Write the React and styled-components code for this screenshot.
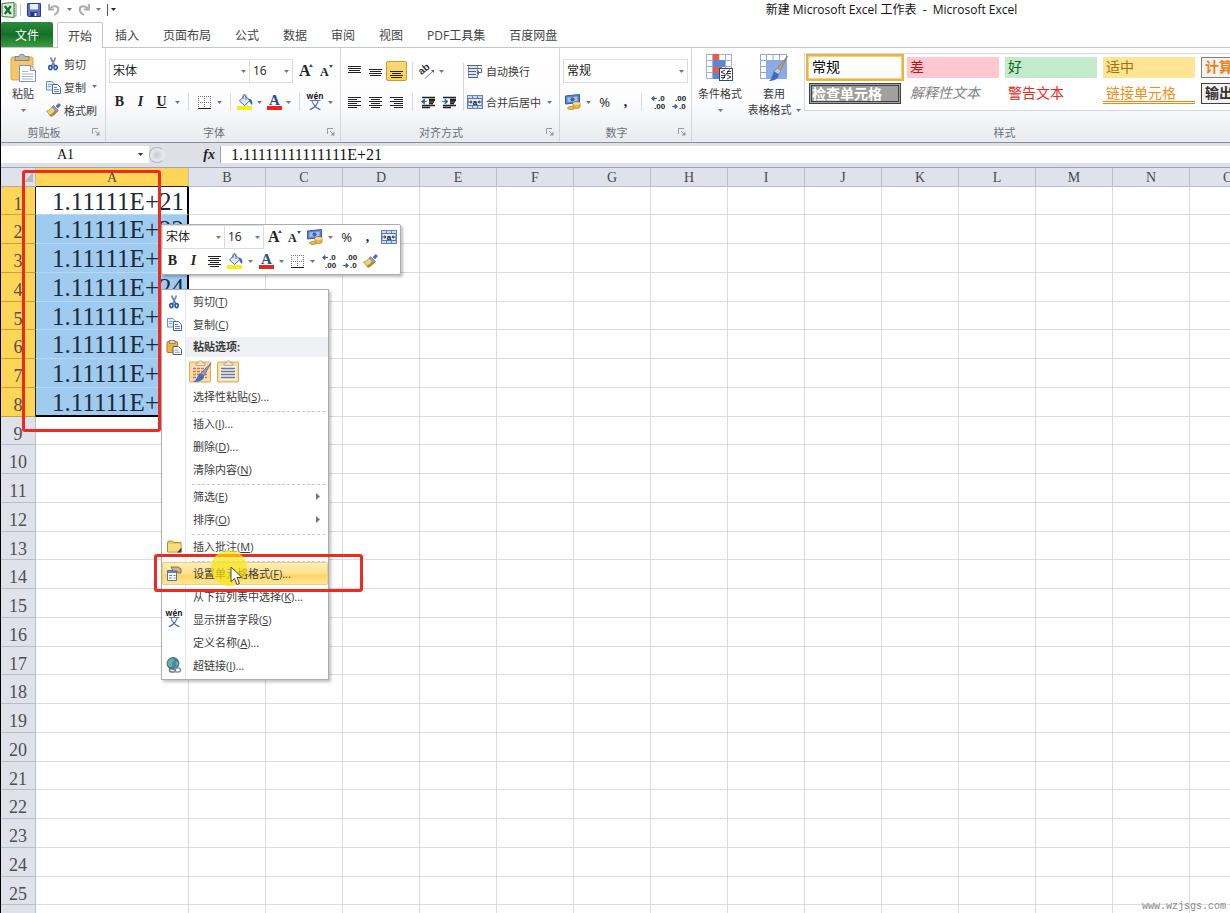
import styled, { createGlobalStyle, css } from 'styled-components'

const GlobalStyle = createGlobalStyle`
  * {
    box-sizing: border-box;
  }

  body {
    margin: 0;
    background: #fff;
    color: #3b3b3b;
    font-family: 'Open Sans', 'Noto Sans CJK SC', sans-serif;
    font-size: 11px;
  }

  button,
  input,
  select {
    font: inherit;
    color: inherit;
  }

  button {
    padding: 0;
    border: none;
    background: none;
  }

  svg {
    display: block;
    flex: none;
    overflow: visible;
  }
`

const Page = styled.div`
  position: relative;
  display: flex;
  flex-direction: column;
  height: 100vh;
  overflow: hidden;
  border-left: 1px solid #000;
`

/* title bar */

const TitleBar = styled.header`
  display: flex;
  align-items: center;
  height: 22px;
  padding-bottom: 3px;
`

const QuickAccess = styled.div`
  display: flex;
  align-items: center;
  width: 126px;
  height: 19px;
`

const QuickSeparator = styled.span`
  width: 1px;
  height: 12px;
  margin: 0 3px;
  background: ${(props) => props.$color || '#c4c4c4'};
`

const Title = styled.h1`
  flex: 1;
  margin: 0;
  padding-left: 426px;
  color: #111;
  font-size: 12px;
  font-weight: 400;
  line-height: 20px;
  text-align: center;
  white-space: nowrap;
`

/* tabs */

const TabStrip = styled.nav`
  display: flex;
  height: 26px;
  border-bottom: 1px solid #c3c7cd;
  font-size: 12px;
`

const FileTab = styled.button`
  width: 52px;
  height: 25px;
  margin-right: 4px;
  border-radius: 2px 2px 0 0;
  background: linear-gradient(#2b8a3a, #13702a 50%, #3c9c3c);
  color: #fff;
`

const Tab = styled.button`
  padding: 0 12px;
  color: #444;
  white-space: nowrap;

  ${(props) =>
    props.$active &&
    css`
      height: 26px;
      padding: 0 10px;
      border: 1px solid #c3c7cd;
      border-bottom: none;
      border-radius: 2px 2px 0 0;
      background: #fff;
    `}
`

/* ribbon */

const RibbonBar = styled.div`
  display: flex;
  height: 95px;
  border-bottom: 1px solid #8a8f98;
  background: linear-gradient(#fff, #fdfdfe 55%, #e8ebef);
`

const Group = styled.section`
  display: flex;
  flex: none;
  flex-direction: column;
  justify-content: space-between;
  width: ${(props) => props.$width}px;
  border-right: 1px solid #d3d6db;
`

const GroupBody = styled.div`
  display: flex;
  align-items: flex-start;
  padding: 4px 0 0 2px;
`

const GroupRows = styled.div`
  display: flex;
  flex-direction: column;
  gap: 7px;
  padding: 11px 0 0 3px;
`

const GroupColumns = styled.div`
  display: flex;
`

const GroupFooter = styled.div`
  display: flex;
  align-items: center;
  height: 20px;
  color: #6a7280;
`

const GroupName = styled.span`
  flex: 1;
  text-align: center;
`

const Launcher = styled.button`
  display: flex;
  justify-content: center;
  width: 18px;
`

const Row = styled.div`
  display: flex;
  align-items: center;
  height: 24px;
`

const FontSteps = styled.div`
  display: flex;
  margin-left: 2px;
`

const Tool = styled.button`
  display: flex;
  flex: none;
  align-items: center;
  justify-content: center;
  width: ${(props) => props.$width || 21}px;
  height: 20px;
  border: 1px solid transparent;
  border-radius: 2px;

  ${(props) =>
    props.$pressed &&
    css`
      border-color: #c89a3c;
      background: linear-gradient(#fbd77c, #ffd455);
    `}
`

const Letter = styled.span`
  color: #222;
  font-family: 'Liberation Serif', serif;
  font-size: 14px;
  font-weight: 700;
  font-style: ${(props) => (props.$italic ? 'italic' : 'normal')};
  line-height: 16px;
  text-decoration: ${(props) => (props.$underline ? 'underline' : 'none')};
`

const Percent = styled.span`
  color: #222;
  font-size: 13px;
  line-height: 16px;
`

const DropButton = styled.button`
  display: flex;
  flex: none;
  align-items: center;
  justify-content: center;
  width: 11px;
  height: 20px;
`

const Separator = styled.span`
  flex: none;
  width: 1px;
  height: 18px;
  margin: 0 5px;
  background: #d5d8dc;
`

const ColumnSeparator = styled.span`
  width: 1px;
  height: 48px;
  margin: 15px 0 0 3px;
  background: #d5d8dc;
`

const IconTextButton = styled.button`
  display: flex;
  align-items: center;
  gap: 3px;
  height: ${(props) => props.$height || 24}px;
  white-space: nowrap;

  svg + svg {
    margin-left: 3px;
  }
`

const ClipboardList = styled.div`
  display: flex;
  flex-direction: column;
  align-items: flex-start;
  padding-left: 3px;
`

const BigButton = styled.button`
  display: flex;
  flex: none;
  flex-direction: column;
  align-items: center;
  width: ${(props) => props.$width}px;
  padding-top: 2px;
  line-height: 16px;
`

const BigLabel = styled.span`
  padding-top: 4px;
`

const BigLabelEnd = styled.span`
  display: flex;
  align-items: center;
  gap: 4px;
  height: 16px;
  white-space: nowrap;
`

const ComboBox = styled.span`
  display: grid;
  flex: none;
  align-items: center;
  width: ${(props) => props.$width}px;
  height: 24px;
  border: 1px solid #d9dce0;
  background: #fff;

  & + & {
    border-left: none;
  }

  select,
  svg {
    grid-area: 1 / 1;
  }

  select {
    width: 100%;
    height: 22px;
    padding: 0 3px;
    border: none;
    background: none;
    appearance: none;
    color: #222;
    font-size: 12px;
    line-height: 20px;
  }

  svg {
    justify-self: end;
    margin-right: 3px;
    pointer-events: none;
  }
`

/* cell style gallery */

const Gallery = styled.div`
  display: grid;
  grid-template-columns: repeat(5, 92px);
  grid-auto-rows: 21px;
  gap: 5px 6px;
  margin: 1px 0 0 2px;
  padding: 3px 4px 6px;
  border: 1px solid #d3d6db;
  background: #fff;
`

const galleryLook = {
  normal: css`
    color: #000;
    box-shadow: 0 0 0 1px #f5d27a, 0 0 0 3px #eab53c;
  `,
  bad: css`
    background: #ffc7ce;
    color: #b01820;
  `,
  good: css`
    background: #c3eacb;
    color: #0c6a1c;
  `,
  neutral: css`
    background: #ffe593;
    color: #a3700c;
  `,
  calc: css`
    border: 1px solid #7f7f7f;
    background: #f2f2f2;
    color: #f08018;
    font-weight: 700;
  `,
  check: css`
    padding: 0;
    border: 3px double #444;
    background: #a0a0a0;
    color: #fff;
    font-weight: 700;
  `,
  explain: css`
    color: #7f7f7f;
    font-style: italic;
  `,
  warning: css`
    color: #e8281c;
  `,
  linked: css`
    padding-bottom: 0;
    border-bottom: 3px double #eb8a0c;
    color: #ee9018;
  `,
  output: css`
    border: 1px solid #3f3f3f;
    background: #f2f2f2;
    color: #333;
    font-weight: 700;
  `,
}

const StyleCell = styled.button`
  padding: 0 3px 2px;
  font-size: 14px;
  line-height: 15px;
  text-align: left;
  white-space: nowrap;
  ${(props) => galleryLook[props.$look]}
`

/* formula bar */

const FormulaBar = styled.div`
  display: flex;
  height: 25px;
  padding: 3px 0 4px;
  border-bottom: 1px solid #9fa4ae;
  background: #dde0e7;
  color: #111;
  font-family: 'Liberation Serif', serif;
`

const NameBox = styled.div`
  display: flex;
  align-items: center;
  width: 148px;
  padding-right: 6px;
  background: #fff;

  input {
    flex: 1;
    width: 100px;
    padding: 0 8px 0 0;
    border: none;
    background: none;
    font-size: 14px;
    text-align: center;
  }
`

const FormulaTools = styled.div`
  display: flex;
  align-items: center;
  justify-content: space-between;
  width: 72px;
  padding-right: 5px;
  border-right: 1px solid #9fa4ae;
`

const FormulaHandle = styled.span`
  width: 16px;
  height: 16px;
  border: 1px solid #b4b8c0;
  border-right-color: transparent;
  border-radius: 8px;
  background: radial-gradient(#c5c8ce, #e6e8ec 60%);
`

const FormulaInput = styled.input`
  flex: 1;
  min-width: 0;
  padding: 0 10px;
  border: none;
  background: #fff;
  color: #111;
  font-size: 16px;
`

/* sheet */

const Sheet = styled.main`
  flex: 1;
  min-height: 0;
  overflow: hidden;
`

const Grid = styled.table`
  width: 1882px;
  table-layout: fixed;
  border-collapse: separate;
  border-spacing: 0;
  font-family: 'Liberation Serif', serif;

  tbody tr {
    height: 29px;
  }

  tbody tr:nth-child(4n + 1) {
    height: 28px;
  }
`

const HeaderCol = styled.col`
  width: 35px;
`

const WideCol = styled.col`
  width: 153px;
`

const Corner = styled.td`
  height: 19px;
  padding: 0 2px 0 0;
  border-right: 1px solid #b9bdc7;
  border-bottom: 1px solid #a9adb8;
  background: #dfe2ea;

  svg {
    margin-left: auto;
  }
`

const ColumnHead = styled.th`
  height: 19px;
  padding: 2px 0 0;
  border-right: 1px solid #b9bdc7;
  border-bottom: 1px solid ${(props) => (props.$active ? '#222' : '#b9bdc7')};
  background: ${(props) => (props.$active ? '#ffd557' : '#dfe2ea')};
  color: #4a4a4a;
  font-size: 14px;
  font-weight: 400;
  line-height: 16px;
`

const RowHead = styled.th`
  padding: 6px 0 0;
  border-right: 1px solid ${(props) => (props.$active ? '#222' : '#b9bdc7')};
  border-bottom: 1px solid ${(props) => (props.$active ? '#c9a040' : '#b9bdc7')};
  background: ${(props) => (props.$active ? '#ffd557' : '#dfe2ea')};
  color: #505050;
  font-size: 18px;
  font-weight: 400;
  line-height: 20px;
`

const Cell = styled.td`
  padding: 0;
  border-right: 1px solid #d9dbdf;
  border-bottom: 1px solid #d9dbdf;
`

const SelectedCell = styled.td`
  padding: 2px 3px 0 0;
  border-right: 2px solid #000;
  border-bottom: 1px solid #b8d8f2;
  background: ${(props) => (props.$current ? '#fff' : '#a0cbf0')};
  color: #1c2a38;
  font-size: 25px;
  line-height: 24px;
  text-align: right;
  white-space: nowrap;

  tr:nth-child(8) & {
    border-bottom: 2px solid #000;
  }
`

/* floating toolbar and menu */

const floating = css`
  position: absolute;
  border: 1px solid #a9acb3;
  background: #fff;
  box-shadow: 2px 2px 3px rgba(0, 0, 0, 0.25);
`

const MiniToolbar = styled.div`
  ${floating}
  top: 224px;
  left: 160px;
  width: 240px;
  height: 51px;
  border-radius: 2px;
`

const ContextMenu = styled.ul`
  ${floating}
  top: 289px;
  left: 160px;
  width: 168px;
  margin: 0;
  padding: 0 0 2px;
  background: linear-gradient(90deg, #fff 23px, #e3e5e9 23px, #e3e5e9 24px, #fff 24px);
  list-style: none;
`

const MenuButton = styled.button`
  display: grid;
  grid-template-columns: 24px 1fr auto;
  align-items: center;
  width: 100%;
  height: 23px;
  padding: 0 8px 1px 0;
  text-align: left;
  white-space: nowrap;

  ${(props) =>
    props.$hot &&
    css`
      border-radius: 2px;
      background: linear-gradient(#fff0c0, #ffe08a 50%, #ffd564 60%, #ffe9a0);
      box-shadow: inset 0 0 0 1px #f0cf7c;
    `}
`

const MenuIcon = styled.span`
  display: flex;
  justify-content: center;
`

const MenuLabel = styled.span`
  padding-left: 7px;
`

const MenuHeading = styled.li`
  display: grid;
  grid-template-columns: 24px 1fr;
  align-items: center;
  height: 21px;
  font-weight: 700;

  ${MenuLabel} {
    background: #eef0f4;
    line-height: 20px;
  }
`

const PasteOptions = styled.li`
  display: flex;
  align-items: center;
  gap: 5px;
  height: 28px;
  padding-left: 27px;
`

const MenuRule = styled.li`
  height: 4px;
  margin: 0 3px 0 30px;
  border-bottom: 1px dashed #c9ccd1;
`

const Marker = styled.div`
  position: absolute;
  border: 3px solid #ee2a20;
  border-radius: 3px;
  pointer-events: none;
`

const ColumnMarker = styled(Marker)`
  top: 170px;
  left: 21px;
  width: 139px;
  height: 262px;
`

const MenuMarker = styled(Marker)`
  top: 554px;
  left: 153px;
  width: 209px;
  height: 38px;
`

const Spotlight = styled.div`
  position: absolute;
  top: 550px;
  left: 210px;
  width: 36px;
  height: 36px;
  border-radius: 50%;
  background: rgba(250, 228, 20, 0.7);
`

const Pointer = styled.svg`
  position: absolute;
  top: 566px;
  left: 229px;
`

const Watermark = styled.span`
  position: absolute;
  right: 4px;
  bottom: 0;
  color: #8a8a8a;
  font-family: 'Liberation Mono', monospace;
  font-size: 10px;
  line-height: 12px;
`

/* icons */

const Arrow = ({ color = '#777' }) => (
  <svg width="5" height="3" viewBox="0 0 5 3">
    <path d="M0 0h5L2.500 3z" fill={color} />
  </svg>
)

const ExcelIcon = () => (
  <svg width="16" height="16" viewBox="0 0 16 16">
    <rect x="6" y="2" width="9" height="12" fill="#fff" stroke="#6d9a72" />
    <path d="M11 4h3M11 6.500h3M11 9h3M11 11.500h3" stroke="#4c9a55" />
    <path d="M1 1.500l12-1v15l-12-1z" fill="#dff0dd" stroke="#3c7d44" />
    <path d="M3.800 4l6 8M9.800 4l-6 8" stroke="#19702b" strokeWidth="2.400" />
  </svg>
)

const SaveIcon = () => (
  <svg width="14" height="14" viewBox="0 0 14 14">
    <path d="M.5.5h13v13h-12l-1-1z" fill="#5a6fd0" stroke="#2c3c94" />
    <rect x="3" y="1" width="8" height="5.500" fill="#e9eefc" />
    <rect x="3.500" y="9" width="7" height="4.500" fill="#26357f" />
    <rect x="7.500" y="10" width="2" height="3" fill="#fff" />
  </svg>
)

const UndoIcon = ({ flip }) => (
  <svg width="12" height="13" viewBox="0 0 12 13">
    <g transform={flip ? 'translate(12 0) scale(-1 1)' : undefined} fill="none" stroke="#a9adb3">
      <path d="M2 5.500C5 2 10.500 2.500 10.300 6.500c-.1 2.500-1.500 4-4 5.500" strokeWidth="2" />
      <path d="M1 1v5.500h5" strokeWidth="1.800" />
    </g>
  </svg>
)

const PasteIcon = () => (
  <svg width="26" height="28" viewBox="0 0 26 28">
    <rect x="1" y="3" width="22" height="23" rx="1.500" fill="#f6c768" stroke="#dba548" />
    <path d="M5 2.500h4c0-3 6-3 6 0h4v4H5z" fill="#b9b6b0" stroke="#77736c" strokeWidth=".8" />
    <path d="M9.500 11.500h11l5 5v11h-16z" fill="#fff" stroke="#7c92b8" />
    <path d="M20.500 11.500v5h5" fill="#dce6f5" stroke="#7c92b8" />
    <path d="M12 17.500h6M12 20h11M12 22.500h11M12 25h11" stroke="#a8b6cc" />
  </svg>
)

const PasteSmallIcon = () => (
  <svg width="16" height="16" viewBox="0 0 16 16">
    <rect x="1" y="2.500" width="10.500" height="11" rx="1" fill="#f0b23c" stroke="#b07c28" />
    <path d="M3.500 1.500h5.500v3H3.500z" fill="#d8d6d0" stroke="#77736c" strokeWidth=".8" />
    <path d="M7 7.500h5.500l3 3v5H7z" fill="#fff" stroke="#4c5c80" />
    <path d="M8.500 11h4M8.500 13.200h5.500" stroke="#8a9ab8" />
  </svg>
)

const CutIcon = () => (
  <svg width="15" height="15" viewBox="0 0 15 15">
    <path d="M4.500 1.500L9 10.500M9.500 1.500L5.500 10.500" stroke="#6d87b8" strokeWidth="1.700" fill="none" />
    <ellipse cx="4.400" cy="11.600" rx="1.600" ry="2" fill="none" stroke="#2b55ac" strokeWidth="1.600" />
    <ellipse cx="9.600" cy="11.600" rx="1.600" ry="2" fill="none" stroke="#2b55ac" strokeWidth="1.600" />
  </svg>
)

const CopyIcon = () => (
  <svg width="15" height="14" viewBox="0 0 15 14">
    <path d="M.5 1.500h5.500l2 2v6.500H.5z" fill="#e6effc" stroke="#6c8cc8" />
    <path d="M2 4.500h4M2 6.500h3" stroke="#7f9fd8" />
    <path d="M6.500 4.500h5l3 3v6h-8z" fill="#fff" stroke="#3e66b4" />
    <path d="M8 7.500h3M8 9.500h5M8 11.500h5" stroke="#5f87d0" />
  </svg>
)

const BrushIcon = () => (
  <svg width="15" height="14" viewBox="0 0 15 14">
    <path d="M10 3l3-2.500 1.500 1.500L12 5z" fill="#5a6fb4" stroke="#384c98" strokeWidth=".6" />
    <path d="M7.500 2.500l5 5-1.500 1.500L6 4z" fill="#8fa0d0" stroke="#5563a0" strokeWidth=".6" />
    <path d="M6 4l5 5c-2 2.500-4 3.500-6 4.500L.5 8C3 7.500 4.500 6 6 4z" fill="#ecd27c" stroke="#a8842c" strokeWidth=".7" />
    <path d="M11 9c-2 2.500-4 3.500-6 4.500L3.500 12C6 11 8 9 9 7z" fill="#a88a38" />
  </svg>
)

const LauncherIcon = () => (
  <svg width="8" height="8" viewBox="0 0 8 8">
    <path d="M.5 6V.5H6M3 3l4 4" fill="none" stroke="#9499a2" />
    <path d="M7.500 3.500v4h-4z" fill="#9499a2" />
  </svg>
)

const FontStepIcon = ({ grow }) => (
  <svg width="16" height="18" viewBox="0 0 16 18">
    <text
      x="1"
      y="14"
      fill="#222"
      fontFamily="Liberation Serif, serif"
      fontSize={grow ? 16 : 12}
      fontWeight="700"
    >
      A
    </text>
    <path d={grow ? 'M11 5l2-3 2 3z' : 'M10 3h4l-2 3z'} fill="#2f4f94" />
  </svg>
)

const BorderIcon = () => (
  <svg width="13" height="13" viewBox="0 0 13 13" fill="none">
    <path d="M.5 0v12M6.500 0v12M12.500 0v12M0 .5h13M0 6.500h13" stroke="#777" strokeDasharray="1 1" />
    <path d="M0 12.500h13" stroke="#222" />
  </svg>
)

const FillIcon = () => (
  <svg width="17" height="16" viewBox="0 0 17 16">
    <path d="M7.500 1.500l5.500 5-5.500 5L2.500 7z" fill="#dbe7f8" stroke="#4d6ba4" />
    <path d="M6 5V2c0-2 3-2 3 0v4" fill="none" stroke="#5d6b84" />
    <path d="M11.500 4.500c3.500.5 4.500 3 3.500 6.500-1.500-1-2.500-3-3.500-6.500z" fill="#3c68b8" />
    <rect y="12" width="15" height="4" fill="#f8ec1c" />
  </svg>
)

const FontColorIcon = () => (
  <svg width="15" height="18" viewBox="0 0 15 18">
    <text x="2" y="12" fill="#2c4a8c" fontFamily="Liberation Serif, serif" fontSize="15" fontWeight="700">
      A
    </text>
    <rect y="13" width="15" height="4" fill="#e8261c" />
  </svg>
)

const PhoneticIcon = () => (
  <svg width="16" height="18" viewBox="0 0 16 18">
    <text x="8" y="6" fill="#222" fontFamily="Open Sans, sans-serif" fontSize="8" fontWeight="700" textAnchor="middle">
      wén
    </text>
    <text x="8" y="16" fill="#3d57b0" fontFamily="Noto Sans CJK SC, sans-serif" fontSize="12" textAnchor="middle">
      文
    </text>
  </svg>
)

const lines = {
  top: 'M0 1.500h13M0 3.500h13M1 5.500h11M0 7.500h13',
  middle: 'M0 4.500h13M1 6.500h11M0 8.500h13M1 10.500h11',
  bottom: 'M0 6.500h13M2 8.500h9M0 10.500h13M1 12.500h11',
  left: 'M0 1.500h13M0 3.500h9M0 5.500h13M0 7.500h9M0 9.500h13M0 11.500h9',
  center: 'M0 1.500h13M2 3.500h9M0 5.500h13M2 7.500h9M0 9.500h13M2 11.500h9',
  right: 'M0 1.500h13M4 3.500h9M0 5.500h13M4 7.500h9M0 9.500h13M4 11.500h9',
}

const AlignIcon = ({ type }) => (
  <svg width="13" height="13" viewBox="0 0 13 13">
    <path d={lines[type]} stroke="#222" strokeWidth="1.200" />
  </svg>
)

const OrientationIcon = () => (
  <svg width="15" height="15" viewBox="0 0 15 15">
    <text x="0" y="9" fill="#333" fontFamily="Liberation Sans, sans-serif" fontSize="10" fontWeight="700" transform="rotate(-40 4 8)">
      ab
    </text>
    <path d="M5 14.500l8-7.500" fill="none" stroke="#888" />
    <path d="M14.500 5.500l-1 3.500-2.500-2.500z" fill="#666" />
  </svg>
)

const IndentIcon = ({ increase }) => (
  <svg width="15" height="13" viewBox="0 0 15 13">
    <path d="M1 1.500h13M8 4.500h6M8 7.500h4M1 9.500h13M1 11.500h8" stroke="#222" strokeWidth="1.400" />
    <path d="M8 3.500h6M8 6h5" stroke="#222" strokeWidth="1.400" />
    <path d={increase ? 'M0 5.500h4M3 3l3 2.500L3 8z' : 'M6 5.500H2M3.500 3L.5 5.500l3 2.500z'} fill="#3560b8" stroke="#3560b8" strokeWidth=".8" />
  </svg>
)

const WrapIcon = () => (
  <svg width="16" height="15" viewBox="0 0 16 15" fill="none">
    <rect x="1.500" y="1.500" width="9" height="12" fill="#dfe4ee" stroke="#8b94a8" />
    <path d="M0 1.500h15M1 4.500h11M1 7.500h8M1 10.500h8M1 13.500h10" stroke="#566077" strokeWidth="1.200" />
    <path d="M12 4.500h2.500v4H11" stroke="#4a66a8" />
    <path d="M12 6v5L9.500 8.500z" fill="#4a66a8" />
  </svg>
)

const MergeIcon = () => (
  <svg width="16" height="14" viewBox="0 0 16 14">
    <rect x=".5" y=".5" width="15" height="13" fill="#c8daf4" stroke="#6582b4" />
    <path d="M5.500 0v4M10.500 0v4M5.500 10v4M10.500 10v4" stroke="#6582b4" />
    <rect x="1" y="3.500" width="14" height="7" fill="#e4edfa" stroke="#5a76b0" />
    <text x="8" y="9.500" fill="#111" fontFamily="Liberation Sans, sans-serif" fontSize="8" fontWeight="700" textAnchor="middle">
      a
    </text>
    <path d="M1.500 7h3M14.500 7h-3" stroke="#23407c" />
    <path d="M3.500 5l2 2-2 2zM12.500 5l-2 2 2 2z" fill="#23407c" />
  </svg>
)

const MoneyIcon = () => (
  <svg width="16" height="16" viewBox="0 0 16 16">
    <path d="M.5 2l14-1.500v8L.5 10z" fill="#5b84cc" stroke="#365a9c" />
    <path d="M2.500 3.500l10-1v4.500l-10 1z" fill="#a4c0ee" />
    <ellipse cx="7.500" cy="5.300" rx="2" ry="2" fill="#3c62a8" />
    <path d="M8 9.500c0-2 7-2 7 0V13c0 2-7 2-7 0z" fill="#edb84a" stroke="#a87820" strokeWidth=".7" />
    <ellipse cx="11.500" cy="9.500" rx="3.500" ry="1.300" fill="#fbe08c" />
    <ellipse cx="6" cy="14" rx="3.500" ry="1.500" fill="#f0c050" stroke="#a87820" strokeWidth=".7" />
  </svg>
)

const DecimalIcon = ({ increase }) => (
  <svg width="16" height="16" viewBox="0 0 16 16">
    <g fill="#222" fontFamily="Liberation Sans, sans-serif" fontSize="8" fontWeight="700">
      <text x={increase ? 8 : 4} y="7">
        {increase ? '.0' : '.00'}
      </text>
      <text x={increase ? 4 : 8} y="15">
        {increase ? '.00' : '.0'}
      </text>
    </g>
    <path
      d={increase ? 'M7 4.500H2M4 2.500L1.500 4.500 4 6.500z' : 'M1 12.500h5M4 10.500l2.500 2L4 14.500z'}
      fill="#3560b8"
      stroke="#3560b8"
    />
  </svg>
)

const ConditionalIcon = () => (
  <svg width="28" height="28" viewBox="0 0 28 28">
    <rect x=".5" y=".5" width="25" height="24" fill="#fff" />
    <path d="M.5.5h25v24H.5zM.5 6.500h25M.5 12.500h25M.5 18.500h25M6.500.5v24M13 .5v24M19.500.5v24" fill="none" stroke="#9db2d8" />
    <rect x="7" y="0" width="6" height="6" fill="#ee5a3c" />
    <rect x="7" y="6" width="12" height="7" fill="#5a86d8" />
    <rect x="7" y="13" width="9" height="6" fill="#ee5a3c" />
    <rect x="7" y="19" width="6" height="6" fill="#5a86d8" />
    <rect x="13.500" y="14.500" width="13" height="12" fill="#fff" stroke="#31486f" />
    <path d="M19 16l-4 2 4 2M15 21.500h4M15 23.500h4M21 17.500h4M21 19.500h4M21 21l4 2-4 2M23.500 15.500l-7 10" fill="none" stroke="#222" strokeWidth=".9" />
  </svg>
)

const TableFormatIcon = () => (
  <svg width="28" height="28" viewBox="0 0 28 28">
    <rect x=".5" y=".5" width="25" height="24" fill="#fff" />
    <rect x="7" y="7" width="19" height="18" fill="#86aeec" />
    <path d="M.5.5h26v24H.5zM.5 6.500h26M.5 12.500h26M.5 18.500h26M6.500.5v24M13 .5v24M19.500.5v24" fill="none" stroke="#8fa9d6" />
    <path d="M27.500 2L20 17l-3-2z" fill="#c9a578" stroke="#7c6040" strokeWidth=".6" />
    <path d="M17 14l4 2.500-2.500 4-4.500-2.500z" fill="#c8ccd4" stroke="#777" strokeWidth=".6" />
    <path d="M14 17.500l5 3c-1 4.500-5 6.500-10 6.500 3-2 3-6 5-9.500z" fill="#3a6cc0" />
  </svg>
)

const PasteOptionIcon = ({ brush }) => (
  <svg width="23" height="23" viewBox="0 0 23 23">
    <rect x=".5" y="2" width="21" height="20" rx="1" fill="#fbdc9f" stroke="#dba95a" />
    <path d="M7 3h2.500c0-3 4-3 4 0H16v2.500H7z" fill="#f3e3c2" stroke="#b3a078" strokeWidth=".8" />
    <rect x="3" y="6" width="16" height="14" fill={brush ? '#fbe0c0' : '#f1f3f7'} />
    <path
      d="M4 8.500h14M4 11.500h14M4 14.500h14M4 17.500h14"
      stroke={brush ? '#d8703c' : '#6d7686'}
      strokeDasharray={brush ? '3 1' : undefined}
      strokeWidth="1.400"
    />
    {brush && (
      <g>
        <path d="M22 3l-7 13-3.500-2.500z" fill="#8f9db8" stroke="#4f5c78" strokeWidth=".6" />
        <path d="M11 13l4 3c0 4-4 6-11 6 4-2 4-6 7-9z" fill="#4672bc" />
      </g>
    )}
  </svg>
)

const FolderIcon = () => (
  <svg width="15" height="13" viewBox="0 0 15 13">
    <path d="M.5 2.500l1-1.500h4l1 1.500h7.500v9.500H.5z" fill="#f0c65a" stroke="#b98c2c" />
    <path d="M1 4h12.500v7.500H1z" fill="#f8dc80" />
    <path d="M10 12.500l4.500-5v5z" fill="#444" />
  </svg>
)

const FormatCellsIcon = () => (
  <svg width="16" height="15" viewBox="0 0 16 15">
    <path d="M1.500 4.500h9v10h-9z" fill="#fff" stroke="#5672a8" />
    <path d="M2 6h8.500" stroke="#5c86cf" strokeWidth="2" />
    <path d="M3 9.500h3M3 12h3M7.500 9.500h2M7.500 12h2" stroke="#6b82ac" />
    <path d="M5 1h7l3 2v4h-3l-1-2H7z" fill="#c9b68c" stroke="#6b5c3c" strokeWidth=".8" />
  </svg>
)

const LinkIcon = () => (
  <svg width="16" height="16" viewBox="0 0 16 16">
    <circle cx="7" cy="6.500" r="6" fill="#4384c4" stroke="#245a94" strokeWidth=".8" />
    <path d="M3 3c2-2 5-1.500 5 0S5 5.500 6 7.500 4 11 2.500 9 1.500 5 3 3zM10 5c2-.5 3 1 2 3s-3 0-2-3z" fill="#6cb870" />
    <rect x="3.500" y="11" width="6" height="4" rx="2" fill="none" stroke="#66707f" strokeWidth="1.500" />
    <rect x="8.500" y="11" width="6" height="4" rx="2" fill="none" stroke="#8a94a3" strokeWidth="1.500" />
  </svg>
)

const SubmenuArrow = () => (
  <svg width="4" height="7" viewBox="0 0 4 7">
    <path d="M0 0v7l4-3.500z" fill="#777" />
  </svg>
)

const tabs = ['插入', '页面布局', '公式', '数据', '审阅', '视图', 'PDF工具集', '百度网盘']

const galleryStyles = [
  ['常规', 'normal'],
  ['差', 'bad'],
  ['好', 'good'],
  ['适中', 'neutral'],
  ['计算', 'calc'],
  ['检查单元格', 'check'],
  ['解释性文本', 'explain'],
  ['警告文本', 'warning'],
  ['链接单元格', 'linked'],
  ['输出', 'output'],
]

const menuItems = [
  { label: '剪切', hotkey: 'T', icon: <CutIcon /> },
  { label: '复制', hotkey: 'C', icon: <CopyIcon /> },
  { heading: '粘贴选项:' },
  { paste: true },
  { label: '选择性粘贴', hotkey: 'S', more: true },
  { rule: true },
  { label: '插入', hotkey: 'I', more: true },
  { label: '删除', hotkey: 'D', more: true },
  { label: '清除内容', hotkey: 'N' },
  { rule: true },
  { label: '筛选', hotkey: 'E', submenu: true },
  { label: '排序', hotkey: 'O', submenu: true },
  { rule: true },
  { label: '插入批注', hotkey: 'M', icon: <FolderIcon /> },
  { rule: true },
  { label: '设置单元格格式', hotkey: 'F', more: true, icon: <FormatCellsIcon />, hot: true },
  { label: '从下拉列表中选择', hotkey: 'K', more: true },
  { label: '显示拼音字段', hotkey: 'S', icon: <PhoneticIcon /> },
  { label: '定义名称', hotkey: 'A', more: true },
  { label: '超链接', hotkey: 'I', more: true, icon: <LinkIcon /> },
]

const columns = 'ABCDEFGHIJKLMNOPQRSTUVW'.split('')
const rows = Array.from({ length: 40 }, (_, i) => i + 1)

const Combo = ({ label, value, width }) => (
  <ComboBox $width={width}>
    <select aria-label={label} defaultValue={value}>
      <option>{value}</option>
    </select>
    <Arrow />
  </ComboBox>
)

const Drop = ({ label }) => (
  <DropButton aria-label={label}>
    <Arrow />
  </DropButton>
)

const RibbonGroup = ({ name, width, launcher = true, children }) => (
  <Group $width={width} aria-label={name}>
    {children}
    <GroupFooter>
      <GroupName>{name}</GroupName>
      {launcher && (
        <Launcher aria-label={`${name}设置`}>
          <LauncherIcon />
        </Launcher>
      )}
    </GroupFooter>
  </Group>
)

const Ribbon = () => (
  <RibbonBar>
    <RibbonGroup name="剪贴板" width={105}>
      <GroupBody>
        <BigButton $width={40}>
          <PasteIcon />
          <BigLabel>粘贴</BigLabel>
          <BigLabelEnd>
            <Arrow />
          </BigLabelEnd>
        </BigButton>
        <ClipboardList>
          <IconTextButton $height={23}>
            <CutIcon />
            剪切
          </IconTextButton>
          <IconTextButton $height={23}>
            <CopyIcon />
            复制
            <Arrow />
          </IconTextButton>
          <IconTextButton $height={23}>
            <BrushIcon />
            格式刷
          </IconTextButton>
        </ClipboardList>
      </GroupBody>
    </RibbonGroup>

    <RibbonGroup name="字体" width={235}>
      <GroupRows>
        <Row>
          <Combo label="字体" value="宋体" width={141} />
          <Combo label="字号" value="16" width={43} />
          <FontSteps>
            <Tool aria-label="增大字号">
              <FontStepIcon grow />
            </Tool>
            <Tool aria-label="减小字号">
              <FontStepIcon />
            </Tool>
          </FontSteps>
        </Row>
        <Row>
          <Tool>
            <Letter>B</Letter>
          </Tool>
          <Tool>
            <Letter $italic>I</Letter>
          </Tool>
          <Tool>
            <Letter $underline>U</Letter>
          </Tool>
          <Drop label="下划线" />
          <Separator />
          <Tool $width={20} aria-label="边框">
            <BorderIcon />
          </Tool>
          <Drop label="边框选项" />
          <Separator />
          <Tool $width={18} aria-label="填充颜色">
            <FillIcon />
          </Tool>
          <Drop label="填充颜色选项" />
          <Tool $width={18} aria-label="字体颜色">
            <FontColorIcon />
          </Tool>
          <Drop label="字体颜色选项" />
          <Separator />
          <Tool $width={20} aria-label="拼音">
            <PhoneticIcon />
          </Tool>
          <Drop label="拼音选项" />
        </Row>
      </GroupRows>
    </RibbonGroup>

    <RibbonGroup name="对齐方式" width={219}>
      <GroupColumns>
        <GroupRows>
          <Row>
            <Tool aria-label="顶端对齐">
              <AlignIcon type="top" />
            </Tool>
            <Tool aria-label="垂直居中">
              <AlignIcon type="middle" />
            </Tool>
            <Tool $pressed aria-label="底端对齐">
              <AlignIcon type="bottom" />
            </Tool>
            <Separator />
            <Tool $width={18} aria-label="方向">
              <OrientationIcon />
            </Tool>
            <Drop label="方向选项" />
          </Row>
          <Row>
            <Tool aria-label="左对齐">
              <AlignIcon type="left" />
            </Tool>
            <Tool aria-label="居中">
              <AlignIcon type="center" />
            </Tool>
            <Tool aria-label="右对齐">
              <AlignIcon type="right" />
            </Tool>
            <Separator />
            <Tool aria-label="减少缩进量">
              <IndentIcon />
            </Tool>
            <Tool aria-label="增加缩进量">
              <IndentIcon increase />
            </Tool>
          </Row>
        </GroupRows>
        <ColumnSeparator />
        <GroupRows>
          <IconTextButton>
            <WrapIcon />
            自动换行
          </IconTextButton>
          <IconTextButton>
            <MergeIcon />
            合并后居中
            <Arrow />
          </IconTextButton>
        </GroupRows>
      </GroupColumns>
    </RibbonGroup>

    <RibbonGroup name="数字" width={132}>
      <GroupRows>
        <Row>
          <Combo label="数字格式" value="常规" width={125} />
        </Row>
        <Row>
          <Tool $width={20} aria-label="会计数字格式">
            <MoneyIcon />
          </Tool>
          <Drop label="会计数字格式选项" />
          <Tool>
            <Percent>%</Percent>
          </Tool>
          <Tool>
            <Letter>,</Letter>
          </Tool>
          <Separator />
          <Tool aria-label="增加小数位数">
            <DecimalIcon increase />
          </Tool>
          <Tool aria-label="减少小数位数">
            <DecimalIcon />
          </Tool>
        </Row>
      </GroupRows>
    </RibbonGroup>

    <RibbonGroup name="样式" width={626} launcher={false}>
      <GroupBody>
        <BigButton $width={52}>
          <ConditionalIcon />
          <BigLabel>条件格式</BigLabel>
          <BigLabelEnd>
            <Arrow />
          </BigLabelEnd>
        </BigButton>
        <BigButton $width={56}>
          <TableFormatIcon />
          <BigLabel>套用</BigLabel>
          <BigLabelEnd>
            表格格式
            <Arrow />
          </BigLabelEnd>
        </BigButton>
        <Gallery>
          {galleryStyles.map(([name, look]) => (
            <StyleCell key={name} $look={look}>
              {name}
            </StyleCell>
          ))}
        </Gallery>
      </GroupBody>
    </RibbonGroup>
  </RibbonBar>
)

const SheetGrid = () => (
  <Sheet>
    <Grid>
      <colgroup>
        <HeaderCol />
        <WideCol />
      </colgroup>
      <thead>
        <tr>
          <Corner>
            <svg width="9" height="10" viewBox="0 0 9 10">
              <path d="M9 0v10H0z" fill="#b5bac6" />
            </svg>
          </Corner>
          {columns.map((name) => (
            <ColumnHead key={name} $active={name === 'A'} scope="col">
              {name}
            </ColumnHead>
          ))}
        </tr>
      </thead>
      <tbody>
        {rows.map((row) => (
          <tr key={row}>
            <RowHead $active={row <= 8} scope="row">
              {row}
            </RowHead>
            {columns.map((name) =>
              name === 'A' && row <= 8 ? (
                <SelectedCell key={name} $current={row === 1}>
                  1.11111E+{20 + row}
                </SelectedCell>
              ) : (
                <Cell key={name} />
              )
            )}
          </tr>
        ))}
      </tbody>
    </Grid>
  </Sheet>
)

const FloatingToolbar = () => (
  <MiniToolbar role="toolbar">
    <Row>
      <Combo label="字体" value="宋体" width={63} />
      <Combo label="字号" value="16" width={39} />
      <Tool aria-label="增大字号">
        <FontStepIcon grow />
      </Tool>
      <Tool $width={20} aria-label="减小字号">
        <FontStepIcon />
      </Tool>
      <Tool $width={20} aria-label="会计数字格式">
        <MoneyIcon />
      </Tool>
      <Drop label="会计数字格式选项" />
      <Tool>
        <Percent>%</Percent>
      </Tool>
      <Tool>
        <Letter>,</Letter>
      </Tool>
      <Tool aria-label="合并后居中">
        <MergeIcon />
      </Tool>
    </Row>
    <Row>
      <Tool>
        <Letter>B</Letter>
      </Tool>
      <Tool>
        <Letter $italic>I</Letter>
      </Tool>
      <Tool aria-label="居中">
        <AlignIcon type="center" />
      </Tool>
      <Tool $width={20} aria-label="填充颜色">
        <FillIcon />
      </Tool>
      <Drop label="填充颜色选项" />
      <Tool $width={20} aria-label="字体颜色">
        <FontColorIcon />
      </Tool>
      <Drop label="字体颜色选项" />
      <Tool $width={20} aria-label="边框">
        <BorderIcon />
      </Tool>
      <Drop label="边框选项" />
      <Tool aria-label="增加小数位数">
        <DecimalIcon increase />
      </Tool>
      <Tool aria-label="减少小数位数">
        <DecimalIcon />
      </Tool>
      <Tool aria-label="格式刷">
        <BrushIcon />
      </Tool>
    </Row>
  </MiniToolbar>
)

const MenuEntry = ({ item }) => {
  if (item.rule) return <MenuRule role="separator" />

  if (item.heading) {
    return (
      <MenuHeading>
        <MenuIcon>
          <PasteSmallIcon />
        </MenuIcon>
        <MenuLabel>{item.heading}</MenuLabel>
      </MenuHeading>
    )
  }

  if (item.paste) {
    return (
      <PasteOptions>
        <button aria-label="保留源格式">
          <PasteOptionIcon brush />
        </button>
        <button aria-label="只保留文本">
          <PasteOptionIcon />
        </button>
      </PasteOptions>
    )
  }

  return (
    <li>
      <MenuButton $hot={item.hot}>
        <MenuIcon>{item.icon}</MenuIcon>
        <MenuLabel>
          {item.label}(<u>{item.hotkey}</u>){item.more && '...'}
        </MenuLabel>
        {item.submenu && <SubmenuArrow />}
      </MenuButton>
    </li>
  )
}

export default function App() {
  return (
    <Page>
      <GlobalStyle />
      <TitleBar>
        <QuickAccess>
          <ExcelIcon />
          <QuickSeparator />
          <Tool $width={20} aria-label="保存">
            <SaveIcon />
          </Tool>
          <Tool $width={20} aria-label="撤消">
            <UndoIcon />
          </Tool>
          <Drop label="撤消选项" />
          <Tool $width={18} aria-label="恢复">
            <UndoIcon flip />
          </Tool>
          <Drop label="恢复选项" />
          <QuickSeparator $color="#555" />
          <Arrow color="#222" />
        </QuickAccess>
        <Title>新建 Microsoft Excel 工作表 &nbsp;-&nbsp; Microsoft Excel</Title>
      </TitleBar>

      <TabStrip>
        <FileTab>文件</FileTab>
        <Tab $active>开始</Tab>
        {tabs.map((tab) => (
          <Tab key={tab}>{tab}</Tab>
        ))}
      </TabStrip>

      <Ribbon />

      <FormulaBar>
        <NameBox>
          <input aria-label="名称框" defaultValue="A1" />
          <Arrow color="#333" />
        </NameBox>
        <FormulaTools>
          <FormulaHandle />
          <Letter $italic>fx</Letter>
        </FormulaTools>
        <FormulaInput aria-label="编辑栏" defaultValue="1.11111111111111E+21" />
      </FormulaBar>

      <SheetGrid />

      <FloatingToolbar />
      <ContextMenu>
        {menuItems.map((item, index) => (
          <MenuEntry key={index} item={item} />
        ))}
      </ContextMenu>

      <ColumnMarker />
      <MenuMarker />
      <Spotlight />
      <Pointer width="13" height="20" viewBox="0 0 13 20">
        <path d="M1 1v14.500l3.500-3 2.500 6 2.500-1-2.500-6h5z" fill="#fff" stroke="#444" />
      </Pointer>
      <Watermark>www.wzjsgs.com</Watermark>
    </Page>
  )
}
